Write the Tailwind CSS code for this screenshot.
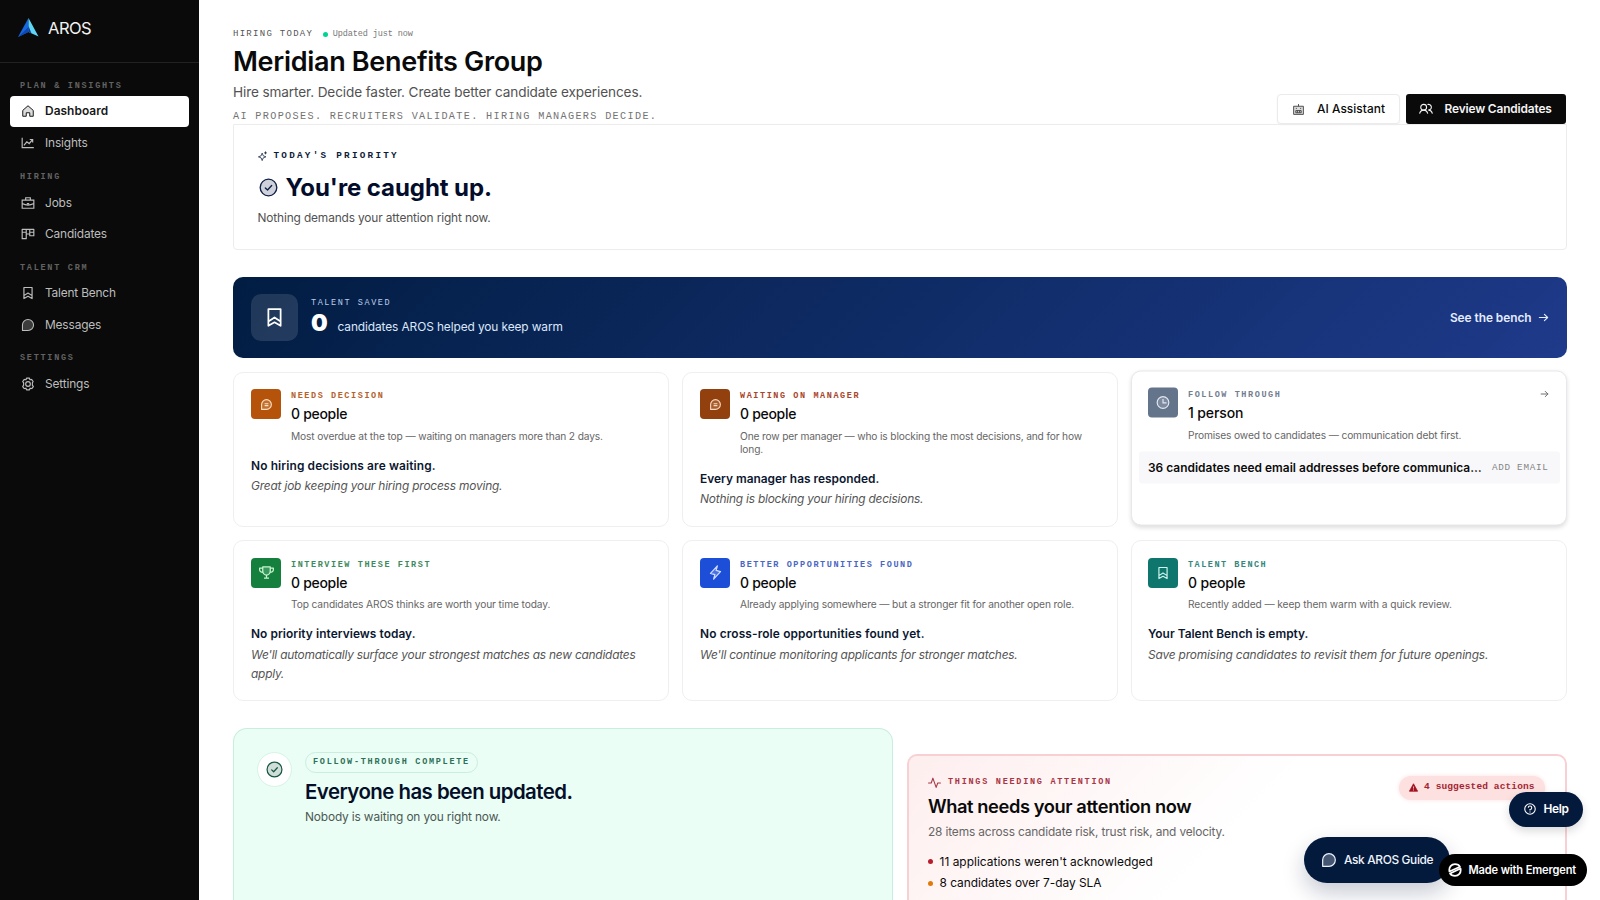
<!DOCTYPE html>
<html lang="en">
<head>
<meta charset="utf-8">
<title>AROS – Dashboard</title>
<script src="https://cdn.jsdelivr.net/npm/@tailwindcss/browser@4"></script>
</head>
<body class="flex h-[900px] w-[1600px] overflow-hidden bg-white font-['Inter',sans-serif] text-[11.9px] tracking-[-0.15px] text-neutral-950">

<svg class="hidden">
  <symbol id="bookmark" viewBox="0 0 24 24"><path d="M5 2.500h14v19l-7-4-7 4z M5 16.500l7-4.500 7 4.500" fill="none" stroke="currentColor" stroke-width="2" stroke-linejoin="round"/></symbol>
  <symbol id="bubble" viewBox="0 0 24 24"><path d="M2.500 21.500V12a9.500 9.500 0 1 1 9.500 9.500z" fill="currentColor" fill-opacity=".28" stroke="currentColor" stroke-width="1.8" stroke-linejoin="round"/></symbol>
  <symbol id="bubbletext" viewBox="0 0 24 24"><path d="M3 21V12a9 9 0 1 1 9 9z" fill="currentColor" fill-opacity=".2" stroke="currentColor" stroke-width="2" stroke-linejoin="round"/><path d="M8.500 10.500h7M8.500 14h7" stroke="currentColor" stroke-width="2"/></symbol>
  <symbol id="check" viewBox="0 0 24 24"><circle cx="12" cy="12" r="10.500" fill="currentColor" fill-opacity=".2" stroke="currentColor" stroke-width="1.7"/><path d="M8 12.500l2.800 2.700L16 9.500" fill="none" stroke="currentColor" stroke-width="1.7" stroke-linecap="round" stroke-linejoin="round"/></symbol>
  <symbol id="arrow" viewBox="0 0 24 24"><path d="M3 12h18M14 5l7 7-7 7" fill="none" stroke="currentColor" stroke-width="2.500" stroke-linecap="round" stroke-linejoin="round"/></symbol>
</svg>

<aside class="h-full w-[199px] shrink-0 bg-[#0a0a0a] text-[#bdbdbd]">
  <div class="flex h-[63px] items-start gap-[9px] border-b border-[#222] pt-[17px] pl-[17px]">
    <svg class="h-[21px] w-[22px]" viewBox="0 0 22 21"><path d="M11.500 1L1 20l10.500-5z" fill="#1668e0"/><path d="M11.500 1L21.500 19.500l-10-4.500z" fill="#5fd6f5"/><path d="M1 20l10.500-5V10z" fill="#0d47b5"/><path d="M11.500 9l3 7.500-3-1.500z" fill="#0b3a9a"/></svg>
    <span class="text-[16.500px] leading-[22px] tracking-[-0.5px] text-[#f2f2f2]">AROS</span>
  </div>
  <nav class="px-[10px]">
    <div class="h-[33px] pt-[17px] pl-[10px] font-['Liberation_Mono',monospace] text-[8.500px] leading-[12px] font-bold tracking-[1.730px] text-[#626262]">PLAN &amp; INSIGHTS</div>
    <a class="mb-[1.250px] flex h-[30.500px] items-center gap-[10.500px] rounded-[4px] bg-white pl-[10.500px] font-semibold tracking-[0.050px] text-[#171717]"><svg class="size-[14px]" viewBox="0 0 24 24" fill="none" stroke="currentColor" stroke-width="1.700" stroke-linejoin="round"><path d="M3 11l9-8 9 8v10h-6v-6H9v6H3z" fill="currentColor" fill-opacity=".15"/></svg>Dashboard</a>
    <a class="flex h-[30.500px] items-center gap-[10.500px] pl-[10.500px]"><svg class="size-[14px]" viewBox="0 0 24 24" fill="none" stroke="currentColor" stroke-width="2"><path d="M2 3v17h20M5 16l5-6 4 3 6-7M15 6h5v5"/></svg>Insights</a>
    <div class="h-[29px] pt-[12.500px] pl-[10px] font-['Liberation_Mono',monospace] text-[8.500px] leading-[12px] font-bold tracking-[1.730px] text-[#626262]">HIRING</div>
    <a class="mb-[1.250px] flex h-[30.500px] items-center gap-[10.500px] pl-[10.500px]"><svg class="size-[14px]" viewBox="0 0 24 24" fill="none" stroke="currentColor" stroke-width="2"><path d="M2 7h20v14H2zM8 7V3h8v4M2 13c6 3 14 3 20 0M10 13h4"/></svg>Jobs</a>
    <a class="flex h-[30.500px] items-center gap-[10.500px] pl-[10.500px]"><svg class="size-[14px]" viewBox="0 0 24 24" fill="none" stroke="currentColor" stroke-width="2" stroke-linejoin="round"><path d="M2 4h20v11h-7v-3H9v8H2zM9 4v8M15 4v8M2 9h7M15 9h7"/></svg>Candidates</a>
    <div class="h-[28.500px] pt-[12px] pl-[10px] font-['Liberation_Mono',monospace] text-[8.500px] leading-[12px] font-bold tracking-[1.730px] text-[#626262]">TALENT CRM</div>
    <a class="mb-[1.250px] flex h-[30.500px] items-center gap-[10.500px] pl-[10.500px] tracking-[-0.200px]"><svg class="size-[14px]"><use href="#bookmark"/></svg>Talent Bench</a>
    <a class="flex h-[30.500px] items-center gap-[10.500px] pl-[10.500px]"><svg class="size-[14px]"><use href="#bubble"/></svg>Messages</a>
    <div class="h-[28.500px] pt-[12px] pl-[10px] font-['Liberation_Mono',monospace] text-[8.500px] leading-[12px] font-bold tracking-[1.730px] text-[#626262]">SETTINGS</div>
    <a class="flex h-[31px] items-center gap-[10.500px] pl-[10.500px]"><svg class="size-[14px]" viewBox="0 0 24 24" fill="none" stroke="currentColor" stroke-width="2" stroke-linejoin="round"><path d="M9.500 2h5l.8 2.700 2.800-.5 2.700 3.500L19.500 10v4l1.700 2.500-2.700 3.300-2.900-.6L14.500 22h-5l-1-2.800-2.900.6L2.900 16.500 4.500 14v-4L2.900 7.700l2.700-3.500 2.900.5z"/><circle cx="12" cy="12" r="4"/></svg>Settings</a>
  </nav>
</aside>

<main class="flex min-w-0 flex-1 flex-col pl-[34px]">
  <header class="flex h-[124px] w-[1333px] shrink-0 items-end justify-between">
    <div class="self-start pt-[28px]">
      <div class="flex h-[12px] items-center font-['Liberation_Mono',monospace] leading-[12px]">
        <span class="text-[9px] tracking-[1.280px] text-[#555]">HIRING TODAY</span>
        <span class="ml-[9.500px] size-[5px] rounded-full bg-emerald-400"></span>
        <span class="ml-[5px] text-[8.500px] tracking-[-0.100px] text-[#777]">Updated just now</span>
      </div>
      <h1 class="mt-[5px] text-[27px] leading-[34px] font-semibold tracking-[-0.310px]">Meridian Benefits Group</h1>
      <p class="mt-[3px] text-[13.600px] leading-[20px] tracking-[-0.120px] text-[#525252]">Hire smarter. Decide faster. Create better candidate experiences.</p>
      <p class="mt-[8px] font-['Liberation_Mono',monospace] text-[10.200px] leading-[14px] tracking-[1.330px] text-[#737373]">AI PROPOSES. RECRUITERS VALIDATE. HIRING MANAGERS DECIDE.</p>
    </div>
    <div class="flex gap-[6.500px]">
      <button class="flex h-[30px] w-[122.500px] items-center gap-[12px] rounded-[4px] border border-[#ebebeb] bg-white pl-[14px] font-medium tracking-[0.040px] shadow-xs"><svg class="size-[13px] text-[#444]" viewBox="0 0 24 24" fill="none" stroke="currentColor" stroke-width="1.700"><path d="M3 6h18v15H3zM12 6V2" fill="currentColor" fill-opacity=".2"/><path d="M7 14h10v4H7zM10 14v4M14 14v4M8 9v2M16 9v2"/></svg>AI Assistant</button>
      <button class="flex h-[30px] w-[160px] items-center gap-[12px] rounded-[3px] bg-[#0a0a0a] pl-[12.500px] font-semibold tracking-[-0.140px] text-[#f5f5f5]"><svg class="size-[14px]" viewBox="0 0 24 24" fill="none" stroke="currentColor" stroke-width="1.900"><circle cx="8" cy="9" r="5"/><path d="M1 20c1-4 4-6 7-6s6 2 7 6M14.500 4.300A5 5 0 1 1 16 14c3 0 6 2 7 6"/></svg>Review Candidates</button>
    </div>
  </header>

  <section class="h-[126px] w-[1333.500px] shrink-0 rounded-b-[4px] border border-[#ececec] pt-[24px] pl-[23.500px]">
    <div class="flex h-[13px] items-center gap-[6px] font-['Liberation_Mono',monospace] text-[9.300px] font-bold tracking-[2.260px] text-[#0b1b3a]"><svg class="size-[10px]" viewBox="0 0 24 24" fill="none" stroke="currentColor" stroke-width="1.800" stroke-linejoin="round"><path d="M10 5l2.500 6.500L19 14l-6.500 2.500L10 23l-2.500-6.500L1 14l6.500-2.500zM18 1v7M14.500 4.500h7"/></svg>TODAY'S PRIORITY</div>
    <h2 class="mt-[8.500px] flex h-[34px] items-center gap-[8px] text-[24px] font-bold tracking-[-0.080px] text-[#020d2b]"><svg class="ml-[1px] size-[19px] text-[#0f1f47]"><use href="#check"/></svg>You're caught up.</h2>
    <p class="mt-[4px] leading-[17px] tracking-[-0.140px] text-[#525252]">Nothing demands your attention right now.</p>
  </section>

  <section class="mt-[27px] flex h-[81px] w-[1333.500px] shrink-0 items-center rounded-[10px] bg-[linear-gradient(135deg,#011d42,#1e3a8a)] pl-[18px] text-[#dce7fb]">
    <span class="grid size-[46.500px] place-items-center rounded-[10px] bg-white/12 text-white"><svg class="size-[21px]"><use href="#bookmark"/></svg></span>
    <div class="ml-[13.500px]">
      <div class="font-['Liberation_Mono',monospace] text-[8.500px] leading-[12px] tracking-[1.580px] text-[#bccbe8]">TALENT SAVED</div>
      <div class="flex h-[30px] items-baseline gap-[10px] leading-[28px]"><span class="text-[23.500px] font-black text-white">0</span><span class="tracking-[-0.100px]">candidates AROS helped you keep warm</span></div>
    </div>
    <a class="mr-[18px] ml-auto flex items-center gap-[6px] font-semibold tracking-[-0.050px] text-[#e4ecff]">See the bench<svg class="size-[11px]"><use href="#arrow"/></svg></a>
  </section>

  <section class="mt-[13.500px] grid w-[1333.500px] shrink-0 grid-cols-3 grid-rows-[155px_160.500px] gap-[13.500px]">
    <article class="rounded-[10px] border border-[#efefef] px-[17px] pt-[16.500px]">
      <div class="flex gap-[10px]">
        <span class="grid size-[30px] shrink-0 place-items-center rounded-[4px] bg-[#b45309] text-[#fbe3c8]"><svg class="size-[13px]"><use href="#bubbletext"/></svg></span>
        <div>
          <div class="pt-[1px] font-['Liberation_Mono',monospace] text-[8.500px] leading-[13px] font-bold tracking-[1.570px] text-[#b4622c]">NEEDS DECISION</div>
          <h3 class="mt-[1px] text-[14px] leading-[20px] font-medium tracking-[-0.300px]">0 people</h3>
          <p class="mt-[5.500px] text-[10.200px] leading-[13.600px] tracking-[-0.130px] text-[#666]">Most overdue at the top — waiting on managers more than 2 days.</p>
        </div>
      </div>
      <h4 class="mt-[13.500px] leading-[18px] font-semibold tracking-[0.130px] text-[#0b1730]">No hiring decisions are waiting.</h4>
      <p class="mt-[1px] leading-[19px] tracking-[-0.180px] text-[#555] italic">Great job keeping your hiring process moving.</p>
    </article>

    <article class="rounded-[10px] border border-[#efefef] px-[17px] pt-[16.500px]">
      <div class="flex gap-[10px]">
        <span class="grid size-[30px] shrink-0 place-items-center rounded-[4px] bg-[#92400e] text-[#fbd9c0]"><svg class="size-[13px]"><use href="#bubbletext"/></svg></span>
        <div>
          <div class="pt-[1px] font-['Liberation_Mono',monospace] text-[8.500px] leading-[13px] font-bold tracking-[1.570px] text-[#a8452a]">WAITING ON MANAGER</div>
          <h3 class="mt-[1px] text-[14px] leading-[20px] font-medium tracking-[-0.300px]">0 people</h3>
          <p class="mt-[5.500px] text-[10.200px] leading-[13.600px] tracking-[-0.150px] text-[#666]">One row per manager — who is blocking the most decisions, and for how<br>long.</p>
        </div>
      </div>
      <h4 class="mt-[13.500px] leading-[18px] font-semibold tracking-[0.010px] text-[#0b1730]">Every manager has responded.</h4>
      <p class="mt-[1px] leading-[19px] tracking-[-0.200px] text-[#555] italic">Nothing is blocking your hiring decisions.</p>
    </article>

    <article class="-translate-y-[1.500px] rounded-[10px] border border-[#e8e8ec] bg-white pt-[16.500px] pr-[17px] pl-[16px] shadow-[0_2px_4px_rgba(0,0,0,0.13)]">
      <div class="flex gap-[10px]">
        <span class="grid size-[30px] shrink-0 place-items-center rounded-[4px] bg-[#64748b] text-[#e2e8f0]"><svg class="size-[14px]" viewBox="0 0 24 24"><circle cx="12" cy="12" r="10" fill="currentColor" fill-opacity=".2" stroke="currentColor" stroke-width="2"/><path d="M12 6v6.500h6" fill="none" stroke="currentColor" stroke-width="2"/></svg></span>
        <div>
          <div class="pt-[1px] font-['Liberation_Mono',monospace] text-[8.500px] leading-[13px] font-bold tracking-[1.570px] text-[#737d90]">FOLLOW THROUGH</div>
          <h3 class="mt-[1px] text-[14px] leading-[20px] font-medium tracking-[-0.120px]">1 person</h3>
          <p class="mt-[5.500px] text-[10.200px] leading-[13.600px] tracking-[-0.130px] text-[#666]">Promises owed to candidates — communication debt first.</p>
        </div>
        <svg class="mt-[2px] ml-auto size-[9px] text-[#666]"><use href="#arrow"/></svg>
      </div>
      <div class="-mr-[11px] -ml-[9px] mt-[9.500px] flex h-[32px] items-center justify-between rounded-[3px] bg-[#f8f8fa] pr-[11px] pl-[9px]">
        <span class="pt-[1px] font-semibold tracking-[0.030px]">36 candidates need email addresses before communica…</span>
        <span class="pt-[1px] font-['Liberation_Mono',monospace] text-[9.300px] tracking-[0.700px] text-[#858585]">ADD EMAIL</span>
      </div>
    </article>

    <article class="rounded-[10px] border border-[#efefef] px-[17px] pt-[16.500px]">
      <div class="flex gap-[10px]">
        <span class="grid size-[30px] shrink-0 place-items-center rounded-[4px] bg-[#15803d] text-[#c8f5d4]"><svg class="size-[15px]" viewBox="0 0 24 24" fill="none" stroke="currentColor" stroke-width="2" stroke-linejoin="round"><path d="M6 3h12v7a6 6 0 0 1-12 0z" fill="currentColor" fill-opacity=".2"/><path d="M6 5H1v2c0 3 2 4.500 5.500 4.500M18 5h5v2c0 3-2 4.500-5.500 4.500M12 16v5M8 21h8"/></svg></span>
        <div>
          <div class="pt-[1px] font-['Liberation_Mono',monospace] text-[8.500px] leading-[13px] font-bold tracking-[1.570px] text-[#3d8a5c]">INTERVIEW THESE FIRST</div>
          <h3 class="mt-[1px] text-[14px] leading-[20px] font-medium tracking-[-0.300px]">0 people</h3>
          <p class="mt-[5.500px] text-[10.200px] leading-[13.600px] tracking-[-0.110px] text-[#666]">Top candidates AROS thinks are worth your time today.</p>
        </div>
      </div>
      <h4 class="mt-[13.500px] leading-[18px] font-semibold tracking-[0.060px] text-[#0b1730]">No priority interviews today.</h4>
      <p class="mt-[2px] leading-[19px] tracking-[-0.220px] text-[#555] italic">We'll automatically surface your strongest matches as new candidates<br>apply.</p>
    </article>

    <article class="rounded-[10px] border border-[#efefef] px-[17px] pt-[16.500px]">
      <div class="flex gap-[10px]">
        <span class="grid size-[30px] shrink-0 place-items-center rounded-[4px] bg-[#1d4ed8] text-[#cfdcff]"><svg class="size-[15px]" viewBox="0 0 24 24"><path d="M15 1.500L4 13.500l7 2-2 7L20 10.500l-7-2z" fill="currentColor" fill-opacity=".25" stroke="currentColor" stroke-width="2" stroke-linejoin="round"/></svg></span>
        <div>
          <div class="pt-[1px] font-['Liberation_Mono',monospace] text-[8.500px] leading-[13px] font-bold tracking-[1.570px] text-[#4966c4]">BETTER OPPORTUNITIES FOUND</div>
          <h3 class="mt-[1px] text-[14px] leading-[20px] font-medium tracking-[-0.300px]">0 people</h3>
          <p class="mt-[5.500px] text-[10.200px] leading-[13.600px] tracking-[-0.130px] text-[#666]">Already applying somewhere — but a stronger fit for another open role.</p>
        </div>
      </div>
      <h4 class="mt-[13.500px] leading-[18px] font-semibold tracking-[0.130px] text-[#0b1730]">No cross-role opportunities found yet.</h4>
      <p class="mt-[2px] leading-[19px] tracking-[-0.210px] text-[#555] italic">We'll continue monitoring applicants for stronger matches.</p>
    </article>

    <article class="rounded-[10px] border border-[#efefef] px-[16px] pt-[16.500px]">
      <div class="flex gap-[10px]">
        <span class="grid size-[30px] shrink-0 place-items-center rounded-[4px] bg-[#0f766e] text-[#ccf5ee]"><svg class="size-[14px]"><use href="#bookmark"/></svg></span>
        <div>
          <div class="pt-[1px] font-['Liberation_Mono',monospace] text-[8.500px] leading-[13px] font-bold tracking-[1.500px] text-[#33877e]">TALENT BENCH</div>
          <h3 class="mt-[1px] text-[14px] leading-[20px] font-medium tracking-[-0.150px]">0 people</h3>
          <p class="mt-[5.500px] text-[10.200px] leading-[13.600px] tracking-[-0.090px] text-[#666]">Recently added — keep them warm with a quick review.</p>
        </div>
      </div>
      <h4 class="mt-[13.500px] leading-[18px] font-semibold tracking-[0.020px] text-[#0b1730]">Your Talent Bench is empty.</h4>
      <p class="mt-[2px] leading-[19px] tracking-[-0.160px] text-[#555] italic">Save promising candidates to revisit them for future openings.</p>
    </article>
  </section>

  <section class="mt-[27px] flex min-h-0 w-[1333.500px] flex-1 gap-[13.500px]">
    <div class="flex w-[660px] gap-[13px] rounded-t-[14px] border border-b-0 border-[#c9eddf] bg-[#ebfef6] pt-[23.500px] pl-[23px]">
      <span class="grid size-[35px] shrink-0 place-items-center rounded-full border border-[#d5f3e6] bg-white text-[#14573f]"><svg class="size-[17px]"><use href="#check"/></svg></span>
      <div>
        <span class="flex h-[21px] w-[172.500px] items-center rounded-full border border-[#c9eddf] pl-[7px] font-['Liberation_Mono',monospace] text-[8.500px] font-bold tracking-[1.720px] text-[#2f7058]">FOLLOW-THROUGH COMPLETE</span>
        <h2 class="mt-[6px] text-[20.400px] leading-[26px] font-semibold tracking-[-0.520px] text-[#030e28]">Everyone has been updated.</h2>
        <p class="mt-[3px] leading-[18px] text-[#4c5853]">Nobody is waiting on you right now.</p>
      </div>
    </div>

    <div class="mt-[26.500px] flex w-[660px] items-start justify-between rounded-t-[10px] border-2 border-b-0 border-[#f8d0d4] bg-[linear-gradient(135deg,#feeeee,#ffffff_50%)] pr-[20px] pl-[19.500px]">
      <div class="pt-[20px]">
        <div class="flex h-[13px] items-center gap-[7px] font-['Liberation_Mono',monospace] text-[8.500px] font-bold tracking-[1.730px] text-[#a83544]"><svg class="size-[13px]" viewBox="0 0 24 24" fill="none" stroke="currentColor" stroke-width="2" stroke-linejoin="round" stroke-linecap="round"><path d="M1 13h5L9 4l6 17 3-8h5"/></svg>THINGS NEEDING ATTENTION</div>
        <h2 class="mt-[4.500px] text-[18.300px] leading-[24px] font-semibold tracking-[-0.410px]">What needs your attention now</h2>
        <p class="mt-[5px] leading-[18px] text-[#666]">28 items across candidate risk, trust risk, and velocity.</p>
        <ul class="mt-[10.500px]">
          <li class="flex h-[21.500px] items-center gap-[6.500px] tracking-[0.040px]"><span class="size-[5px] rounded-full bg-[#b91c2c]"></span>11 applications weren't acknowledged</li>
          <li class="flex h-[21.500px] items-center gap-[6.500px] tracking-[-0.020px]"><span class="size-[5px] rounded-full bg-[#e07a0c]"></span>8 candidates over 7-day SLA</li>
        </ul>
      </div>
      <span class="mt-[19.500px] flex h-[24px] w-[145.500px] items-center gap-[6px] rounded-full bg-[#fde0e0] pl-[10px] font-['Liberation_Mono',monospace] text-[9.500px] font-bold tracking-[0.120px] text-[#a32632] shadow-[0_0_4px_#fde0e0]"><svg class="size-[9px]" viewBox="0 0 24 24"><path d="M12 2l11 20H1z" fill="#a3121f" stroke="#a3121f" stroke-width="2" stroke-linejoin="round"/><path d="M12 9v6M12 17v3" stroke="#fde0e0" stroke-width="2"/></svg>4 suggested actions</span>
    </div>
  </section>
</main>

<button class="absolute top-[792px] left-[1509px] flex h-[34.500px] w-[74px] items-center gap-[7.500px] rounded-full bg-[#031a3d] pl-[15px] font-semibold tracking-[-0.350px] text-white shadow-[0_4px_10px_rgba(0,0,0,0.15)]"><svg class="size-[12px]" viewBox="0 0 24 24" fill="none" stroke="currentColor" stroke-width="2.200"><circle cx="12" cy="12" r="10.500"/><path d="M8.500 9.500a3.500 3.500 0 1 1 3.500 3.500v2M12 17v2"/></svg>Help</button>
<button class="absolute top-[837px] left-[1304px] flex h-[46px] w-[146px] items-center gap-[7px] rounded-full bg-[#031a3d] pl-[17px] font-medium tracking-[-0.350px] text-[#eef3fb] shadow-[0_10px_22px_rgba(0,20,60,0.22)]"><svg class="size-[16px]"><use href="#bubble"/></svg>Ask AROS Guide</button>
<a class="absolute top-[854px] left-[1438.500px] flex h-[32px] w-[148px] items-center gap-[7px] rounded-full bg-black pl-[9px] text-[11.050px] font-semibold tracking-[-0.120px] text-white"><svg class="size-[14px]" viewBox="0 0 24 24" fill="none" stroke="#fff" stroke-width="3" stroke-linecap="round" stroke-linejoin="round"><path d="M2.500 14.500C1 7 6 2 12 2c4 0 7 1.500 8.500 4.500L2.500 14.500M21.500 9.500C23 17 18 22 12 22c-4 0-7-1.500-8.500-4L21.500 9.500"/></svg>Made with Emergent</a>

</body>
</html>
